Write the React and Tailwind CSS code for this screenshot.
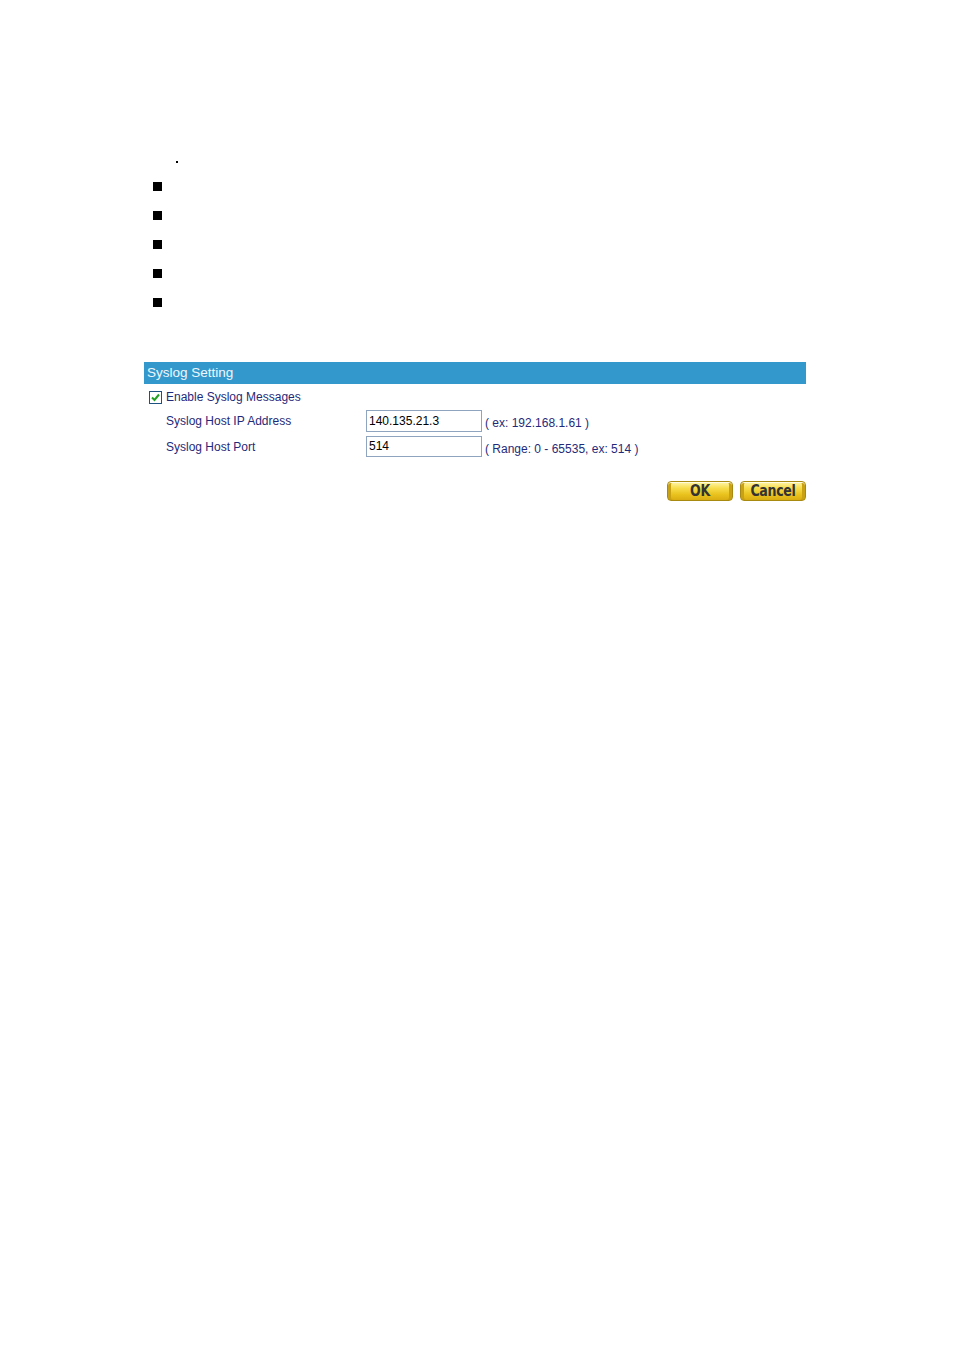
import React from "react";

function YellowButton({ label, width }) {
  return (
    <div
      className="h-[20px] rounded-[4px] border border-[#a88a10] bg-[linear-gradient(to_bottom,#fff6a8_0%,#f7dc4a_35%,#e9c21e_70%,#d9ad12_100%)] flex items-center justify-center shadow-[inset_0_1px_0_#fffbe0,inset_3px_0_0_#c9a114,inset_-3px_0_0_#c9a114]"
      style={{ width }}
    >
      <span className="font-['DejaVu_Sans_Condensed','DejaVu_Sans',sans-serif] font-bold text-[14px] leading-none text-[#333333] tracking-[-0.3px] [font-stretch:condensed] scale-y-[1.1]">
        {label}
      </span>
    </div>
  );
}

export default function App() {
  const squares = [0, 1, 2, 3, 4];
  return (
    <div className="w-[954px] h-[1350px] bg-white font-['Liberation_Sans',Arial,sans-serif] overflow-hidden">
      <div className="pt-[161px] pl-[176px]">
        <div className="w-[2px] h-[2px] bg-black" />
      </div>
      <div className="pl-[153px] pt-[19px]">
        {squares.map((i) => (
          <div key={i} className="h-[29px]">
            <div className="w-[9px] h-[9px] bg-black" />
          </div>
        ))}
      </div>
      <div className="ml-[144px] w-[662px] mt-[35px]">
        <div className="h-[22px] bg-[#3399cc] pl-[3px] text-[13.5px] leading-[22px] text-[#eef7ff]">
          Syslog Setting
        </div>
        <div className="mt-[6px] h-[14px] flex items-center pl-[5px]">
          <div className="w-[13px] h-[13px] border border-[#1c5180] bg-white flex items-center justify-center">
            <svg width="11" height="11" viewBox="0 0 11 11">
              <path d="M2 5.5 L4.5 8 L9 2.5" fill="none" stroke="#21a121" strokeWidth="2" />
            </svg>
          </div>
          <span className="ml-[4px] text-[12px] text-[#1f2a7a]">Enable Syslog Messages</span>
        </div>
        <div className="mt-[6px] h-[22px] flex items-center">
          <div className="w-[222px] pl-[22px] text-[12px] text-[#1f2a7a]">Syslog Host IP Address</div>
          <div className="w-[116px] h-[22px] border border-[#8fa4bf] bg-white pl-[2px] text-[12px] leading-[20px] text-black">
            140.135.21.3
          </div>
          <div className="ml-[3px] pt-[4px] text-[12px] text-[#1f2a7a]">( ex: 192.168.1.61 )</div>
        </div>
        <div className="mt-[4px] h-[21px] flex items-center">
          <div className="w-[222px] pl-[22px] text-[12px] text-[#1f2a7a]">Syslog Host Port</div>
          <div className="w-[116px] h-[21px] border border-[#8fa4bf] bg-white pl-[2px] text-[12px] leading-[19px] text-black">
            514
          </div>
          <div className="ml-[3px] pt-[4px] text-[12px] text-[#1f2a7a]">( Range: 0 - 65535, ex: 514 )</div>
        </div>
        <div className="mt-[24px] flex justify-end gap-[7px]">
          <YellowButton label="OK" width={66} />
          <YellowButton label="Cancel" width={66} />
        </div>
      </div>
    </div>
  );
}
